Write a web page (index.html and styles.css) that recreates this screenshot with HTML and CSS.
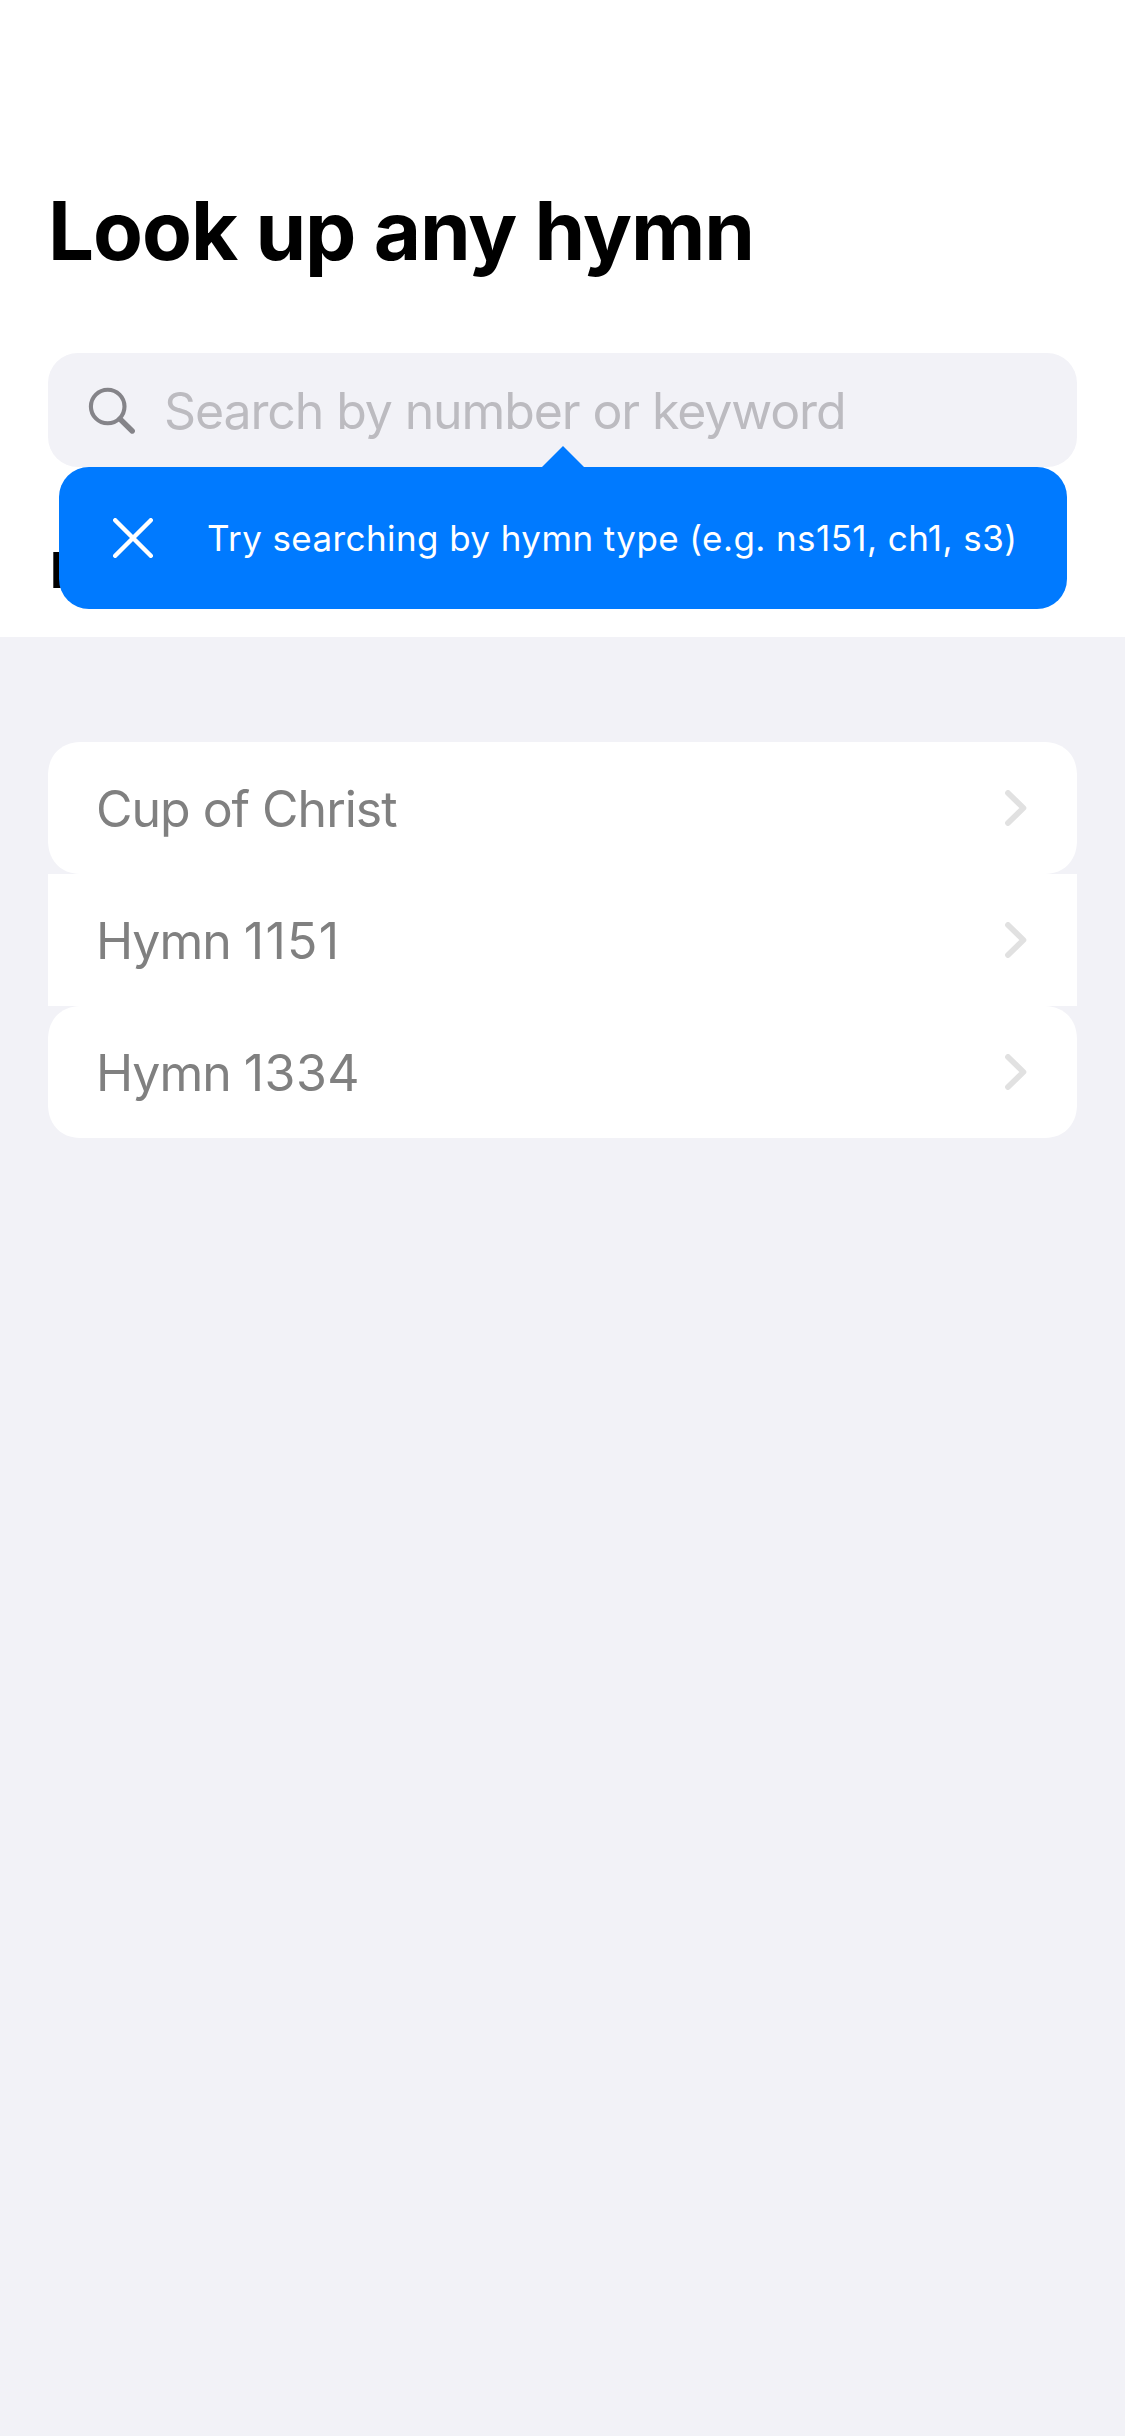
FILE: index.html
```
<!DOCTYPE html>
<html lang="en">
<head>
<meta charset="utf-8">
<title>Look up any hymn</title>
<link rel="stylesheet" href="styles.css">
</head>
<body>
<header class="header">
  <h1 class="title">Look up any hymn</h1>
  <div class="search">
    <svg class="search-icon" viewBox="0 0 48 48" width="48" height="48" aria-hidden="true">
      <circle cx="20.7" cy="20.5" r="16.8"/>
      <path class="handle" d="M33 33 45.2 45"/>
    </svg>
    <span class="placeholder">Search by number or keyword</span>
    <div class="tooltip">
      <svg class="close-icon" viewBox="0 0 40 40" width="40" height="40" aria-hidden="true">
        <path d="M2.2 2.2 37.8 37.8M37.8 2.2 2.2 37.8"/>
      </svg>
      <span class="tip-text">Try searching by hymn type (e.g. ns151, ch1, s3)</span>
    </div>
  </div>
  <h2 class="subtitle">Recent hymns</h2>
</header>
<main class="list">
  <a class="row row-rounded"><span class="label">Cup of Christ</span>
    <svg class="chevron" viewBox="0 0 22 36" width="22" height="36" aria-hidden="true"><path d="M3 3 18.4 18 3 33"/></svg></a>
  <a class="row"><span class="label">Hymn <span class="number-ones">1151</span></span>
    <svg class="chevron" viewBox="0 0 22 36" width="22" height="36" aria-hidden="true"><path d="M3 3 18.4 18 3 33"/></svg></a>
  <a class="row row-rounded"><span class="label">Hymn <span class="number">1334</span></span>
    <svg class="chevron" viewBox="0 0 22 36" width="22" height="36" aria-hidden="true"><path d="M3 3 18.4 18 3 33"/></svg></a>
</main>
</body>
</html>
```
FILE: styles.css
```
* {
  box-sizing: border-box;
}

body {
  margin: 0;
  min-height: 2436px;
  background: #f2f2f7;
  font-family: Inter, "Liberation Sans", sans-serif;
  color: #000;
}

.header {
  height: 637px;
  padding: 181px 48px 0;
  background: #fff;
}

.title {
  margin: 0 0 72px;
  font-size: 81.5px;
  font-weight: 700;
  line-height: 100px;
  letter-spacing: -1.04px;
}

.search {
  position: relative;
  display: flex;
  align-items: center;
  height: 114px;
  padding-left: 39px;
  border-radius: 30px;
  background: #f2f2f7;
}

.search-icon {
  margin-right: 29px;
  fill: none;
  stroke: #858489;
  stroke-width: 4.1;
  stroke-linecap: round;
}

.search-icon .handle {
  stroke-width: 5.4;
}

.placeholder {
  padding-top: 2px;
  font-size: 50px;
  line-height: 60px;
  letter-spacing: -1.11px;
  color: #bcbbc0;
}

.tooltip {
  position: absolute;
  top: 114px;
  left: 11px;
  display: flex;
  align-items: center;
  width: 1008px;
  height: 142px;
  padding-left: 54px;
  border-radius: 30px;
  background: #007aff;
  color: #fff;
}

.tooltip::before {
  content: "";
  position: absolute;
  top: -21px;
  left: 483px;
  border: solid transparent;
  border-width: 0 21px 21px;
  border-bottom-color: #007aff;
}

.close-icon {
  margin-right: 54px;
  fill: none;
  stroke: #fff;
  stroke-width: 4.4;
  stroke-linecap: round;
}

.tip-text {
  font-size: 35px;
  line-height: 42px;
  letter-spacing: 0.41px;
  white-space: nowrap;
}

.subtitle {
  margin: 73px 0 0 2px;
  font-size: 50px;
  font-weight: 700;
  line-height: 60px;
}

.list {
  padding: 105px 48px 0;
}

.row {
  display: flex;
  align-items: center;
  justify-content: space-between;
  height: 132px;
  padding: 0 50px 0 48px;
  background: #fff;
}

.row-rounded {
  border-radius: 34px;
  corner-shape: superellipse(1.15);
}

.label {
  padding-top: 2px;
  font-size: 50px;
  line-height: 60px;
  letter-spacing: -1.03px;
  color: #808080;
}

.number-ones {
  letter-spacing: 1.3px;
}

.number {
  letter-spacing: 0.5px;
}

.chevron {
  fill: none;
  stroke: #e1e1e1;
  stroke-width: 5.8;
  stroke-linecap: round;
  stroke-linejoin: round;
}
```
